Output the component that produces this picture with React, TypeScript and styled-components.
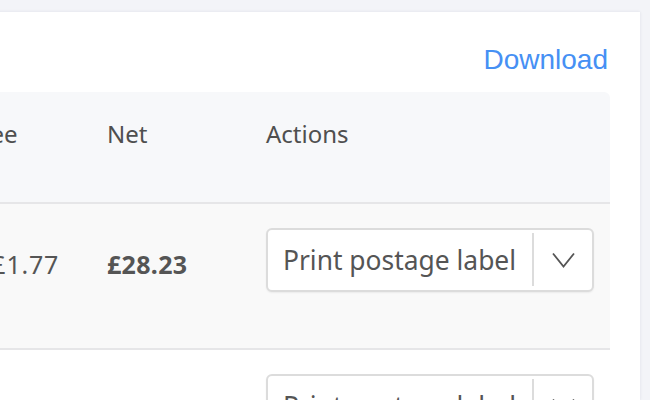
import React from "react";
import styled, { createGlobalStyle } from "styled-components";

const GlobalStyle = createGlobalStyle`
  html, body {
    margin: 0;
    padding: 0;
    background: #f3f4f8;
    overflow: hidden;
  }
  body {
    font-family: "Noto Sans", "Open Sans", sans-serif;
    color: #555;
  }
`;

const Page = styled.div`
  display: flex;
  justify-content: flex-end;
  height: 400px;
  box-sizing: border-box;
  padding: 12px 10px 0 0;
  overflow: hidden;
`;

const Card = styled.section`
  flex: 0 0 1100px;
  box-sizing: border-box;
  background: #fff;
  box-shadow: 0 0 3px rgba(30, 40, 80, 0.1);
  padding: 30px 30px 40px 30px;
`;

const Toolbar = styled.div`
  display: flex;
  justify-content: flex-end;
  margin-bottom: 14px;
`;

const DownloadLink = styled.a`
  font-family: "Liberation Sans", Arial, sans-serif;
  font-size: 28px;
  line-height: 36px;
  margin-right: 2px;
  color: #4690f4;
  text-decoration: none;
  cursor: pointer;
`;

const Table = styled.div`
  display: flex;
  flex-direction: column;
`;

const Row = styled.div<{ $variant: "head" | "shaded" | "plain" }>`
  display: grid;
  grid-template-columns: 1fr 129px 159px 344px;
  min-height: ${(p) => (p.$variant === "head" ? "110px" : "144px")};
  background: ${(p) =>
    p.$variant === "head" ? "#f7f8fa" : p.$variant === "shaded" ? "#f9f9f9" : "#fff"};
  border-bottom: 2px solid #e6e6e8;
  border-radius: ${(p) => (p.$variant === "head" ? "6px 6px 0 0" : "0")};
`;

const HeadCell = styled.div`
  font-size: 24px;
  line-height: 32px;
  padding-top: 26px;
  color: #4f4f4f;
`;

const Cell = styled.div<{ $bold?: boolean }>`
  font-size: 25px;
  line-height: 32px;
  letter-spacing: ${(p) => (p.$bold ? "0.3px" : "0.8px")};
  padding-top: 44px;
  color: #555;
  font-weight: ${(p) => (p.$bold ? 700 : 400)};
`;

const ActionCell = styled.div`
  padding-top: 24px;
`;

const SplitButton = styled.div`
  display: inline-flex;
  align-items: stretch;
  height: 64px;
  box-sizing: border-box;
  border: 2px solid #dcdcdc;
  border-radius: 6px;
  background: #fff;
  box-shadow: 0 1px 2px rgba(0, 0, 0, 0.06);
`;

const ButtonLabel = styled.button`
  all: unset;
  display: flex;
  align-items: center;
  padding: 0 16px 0 15px;
  font-family: "Noto Sans", "Open Sans", sans-serif;
  font-size: 26.4px;
  color: #555;
  cursor: pointer;
`;

const Divider = styled.span`
  width: 2px;
  margin: 3px 0 4px;
  background: #dcdcdc;
`;

const Toggle = styled.button`
  all: unset;
  width: 58px;
  display: flex;
  align-items: center;
  justify-content: center;
  cursor: pointer;
`;

const Chevron = () => (
  <svg width="23" height="16" viewBox="0 0 23 16" fill="none">
    <polyline points="1,1.5 11.5,14.5 22,1.5" stroke="#555" strokeWidth="1.8" />
  </svg>
);

const rows = [
  { order: "Order #1042", fee: "–£1.77", net: "£28.23", variant: "shaded" as const },
  { order: "Order #1041", fee: "–£1.12", net: "£17.88", variant: "plain" as const },
];

export default function App() {
  return (
    <>
      <GlobalStyle />
      <Page>
        <Card>
          <Toolbar>
            <DownloadLink>Download</DownloadLink>
          </Toolbar>
          <Table>
            <Row $variant="head">
              <HeadCell>Order</HeadCell>
              <HeadCell>Fee</HeadCell>
              <HeadCell>Net</HeadCell>
              <HeadCell>Actions</HeadCell>
            </Row>
            {rows.map((r) => (
              <Row key={r.order} $variant={r.variant}>
                <Cell>{r.order}</Cell>
                <Cell>{r.fee}</Cell>
                <Cell $bold>{r.net}</Cell>
                <ActionCell>
                  <SplitButton>
                    <ButtonLabel>Print postage label</ButtonLabel>
                    <Divider />
                    <Toggle aria-label="More actions">
                      <Chevron />
                    </Toggle>
                  </SplitButton>
                </ActionCell>
              </Row>
            ))}
          </Table>
        </Card>
      </Page>
    </>
  );
}
